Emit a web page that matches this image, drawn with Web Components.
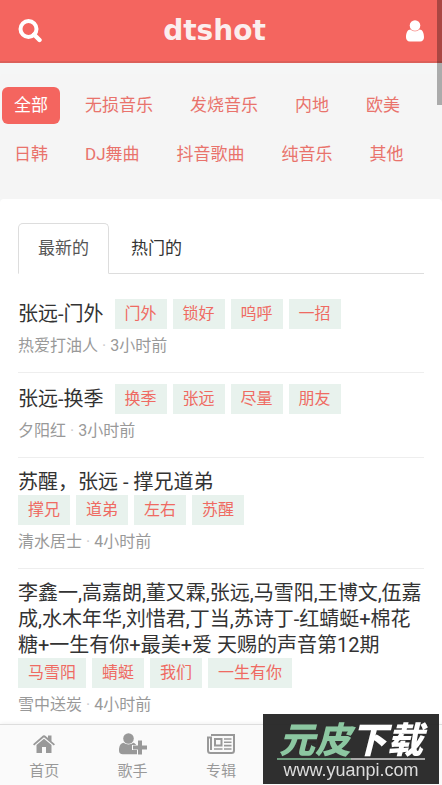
<!DOCTYPE html>
<html lang="zh-CN">
<head>
<meta charset="utf-8">
<meta name="viewport" content="width=device-width, initial-scale=1">
<title>dtshot</title>
<style>
  html, body { margin: 0; }
  body {
    font-family: Roboto, "Noto Sans CJK SC", sans-serif;
    background: #f5f6f6;
    color: #333;
    --accent: #f4655f;
    --line: #ddd;
  }
</style>
</head>
<body>
<music-app></music-app>
<script>
const define = (name, html, setup) => customElements.define(name, class extends HTMLElement {
  constructor() {
    super();
    this.attachShadow({ mode: 'open' }).innerHTML = html;
  }
  connectedCallback() { if (setup) setup(this, this.shadowRoot); }
});

const icons = {
  search: '<svg viewBox="0 0 24 24" width="24" height="24"><circle cx="10.5" cy="10" r="8" fill="none" stroke="currentColor" stroke-width="4"/><path d="M16 15.500l5.500 5.500" stroke="currentColor" stroke-width="4.400" stroke-linecap="round"/></svg>',
  user: '<svg viewBox="0 0 18 22" width="18" height="22"><circle cx="9" cy="5.500" r="5.300" fill="currentColor"/><path d="M4.500 9.500C1.500 9.500 0 13 0 17.300C0 20 1.500 21.500 3.800 21.500H14.200C16.500 21.500 18 20 18 17.300C18 13 16.500 9.500 13.500 9.500C11 11.900 7 11.900 4.500 9.500Z" fill="currentColor"/></svg>',
  home: '<svg viewBox="0 0 22 20" width="22" height="20" fill="currentColor"><path d="M0 10.300L10 1.500Q11 .8 12 1.500L15 4.100V1.500H18.500V7.200L22 10.300L20.800 11.600L11 3.300L1.200 11.600Z"/><path d="M11 4.700L18.500 11V19H13V13H9V19H3.500V11Z"/></svg>',
  singer: '<svg viewBox="0 0 28 22" width="28" height="22" fill="currentColor"><circle cx="9.500" cy="5.500" r="5.300"/><path d="M4.800 9.800C7.500 12 11.500 12 14.200 9.800C15.500 10 16.500 10.800 17.200 12H13V17H18V21.300H3.800C1.300 21.300 0 20 0 17.500C0 13 1.700 10 4.800 9.800Z"/><path d="M19 7.500H23V12.500H28V16.500H23V21.500H19V16.500H14V12.500H19Z"/></svg>',
  album: '<svg viewBox="0 0 28 20" width="28" height="20"><path d="M4 1H27V16.500Q27 19 24.500 19H3.500Q1 19 1 16.500V3.500H4V16" fill="none" stroke="currentColor" stroke-width="2"/><path d="M8 5H14.500V11.500H8Z" fill="none" stroke="currentColor" stroke-width="2"/><path d="M17 5H24.500M17 8.300H24.500M17 11.600H24.500M7 15H15.500M17 15H24.500" stroke="currentColor" stroke-width="1.600"/></svg>',
  playlist: '<svg viewBox="0 0 24 20" width="24" height="20"><path d="M2 2H22V18H2Z" fill="none" stroke="currentColor" stroke-width="3"/><path d="M5 8H19M5 13H19" stroke="currentColor" stroke-width="2"/></svg>'
};
icons.mine = icons.user;

define('app-icon', '<style>:host{display:inline-flex}svg{display:block}</style><span></span>', (el, root) => {
  root.querySelector('span').innerHTML = icons[el.getAttribute('name')] || '';
});

define('app-header', `
  <style>
    :host { display: grid; grid-template-columns: 44px 1fr 44px; align-items: center; height: 63px; padding: 0 5px 0 8px;
      background: var(--accent); border-bottom: 2px solid #dc605a; color: #fff; box-sizing: border-box; }
    button { border: 0; background: none; color: inherit; padding: 0; height: 44px; display: flex; align-items: center; justify-content: center; }
    a { justify-self: center; padding-right: 16px; color: #fbeeee; text-decoration: none; font: bold 28px/40px "DejaVu Sans", sans-serif; }
  </style>
  <button aria-label="搜索"><app-icon name="search"></app-icon></button>
  <a href="#">dtshot</a>
  <button aria-label="用户"><app-icon name="user"></app-icon></button>`);

define('category-link', `
  <style>
    :host { display: block; }
    a { display: block; padding: 0 12px; font-size: 17px; line-height: 37px; border-radius: 6px; color: #e9736c; text-decoration: none; }
    :host([active]) a { background: var(--accent); color: #fff; }
  </style>
  <a href="#"><slot></slot></a>`);

define('category-bar', `
  <style>
    :host { display: block; padding: 11px 0 0; }
    nav { display: flex; flex-wrap: wrap; gap: 12px 13px; padding: 13px 2px 26px; background: #f5f5f5; border-radius: 4px; }
  </style>
  <nav><slot></slot></nav>`);

define('sort-tabs', `
  <style>
    :host { display: flex; border-bottom: 1px solid var(--line); }
    button { font: inherit; font-size: 17px; line-height: 24px; padding: 12px 19px 13px; margin: 0 2px -1px 0; border: 1px solid transparent;
      border-radius: 5px 5px 0 0; background: none; color: #333; }
    button[aria-selected=true] { border-color: var(--line); border-bottom-color: #fff; background: #fff; color: #555; }
  </style>
  <button role="tab" aria-selected="true">最新的</button><button role="tab" aria-selected="false">热门的</button>`);

define('song-tag', `
  <style>
    :host { display: block; }
    a { display: block; padding: 0 10px; font-size: 16px; line-height: 30px; background: #e8f2ed; color: #ef6a62; text-decoration: none; }
  </style>
  <a href="#"><slot></slot></a>`);

define('song-item', `
  <style>
    :host { display: block; padding: 11px 0 15px; border-bottom: 1px solid #eee; }
    :host(:last-of-type) { border-bottom: 0; padding-bottom: 8px; }
    .top { display: flex; flex-wrap: wrap; align-items: center; column-gap: 11px; }
    h2 { margin: 0; font-size: 20px; line-height: 26px; font-weight: 400; color: #333; }
    .tags { display: flex; gap: 6px; }
    p { margin: 6px 0 0; font-size: 16px; line-height: 22px; color: #999; }
    i { color: #ccc; font-style: normal; }
  </style>
  <div class="top"><h2><slot name="title"></slot></h2><div class="tags"><slot></slot></div></div>
  <p><span class="by"></span> <i>·</i> <span class="when"></span></p>`, (el, root) => {
  root.querySelector('.by').textContent = el.getAttribute('by');
  root.querySelector('.when').textContent = el.getAttribute('when');
});

define('song-panel', `
  <style>
    :host { display: block; flex: 1; background: #fff; border-radius: 4px 4px 0 0; padding: 24px 18px 0; }
    .list { padding-top: 14px; }
  </style>
  <sort-tabs></sort-tabs>
  <div class="list"><slot></slot></div>`);

define('nav-item', `
  <style>
    :host { display: block; flex: 1; }
    a { display: flex; flex-direction: column; align-items: center; color: #999; text-decoration: none; font-size: 15px; line-height: 20px; }
    app-icon { height: 26px; align-items: center; margin-bottom: 4px; }
    :host([active]) a { color: var(--accent); }
  </style>
  <a href="#"><app-icon></app-icon><slot></slot></a>`, (el, root) => {
  const icon = document.createElement('app-icon');
  icon.setAttribute('name', el.getAttribute('icon'));
  root.querySelector('app-icon').replaceWith(icon);
  if (el.hasAttribute('label')) root.querySelector('a').setAttribute('aria-label', el.getAttribute('label'));
});

define('bottom-nav', `
  <style>
    :host { display: flex; position: sticky; bottom: 0; padding: 6px 0 4px; background: #fafafa; border-top: 1px solid var(--line); box-shadow: 0 -1px 4px rgba(0,0,0,.06); }
  </style>
  <slot></slot>`);

define('site-watermark', `
  <style>
    :host { position: fixed; right: 3px; bottom: 1px; width: 176px; height: 70px; background: rgba(38,38,38,.96);
      display: flex; flex-direction: column; align-items: center; box-sizing: border-box; padding-top: 4px; font-family: "Liberation Sans", "Noto Sans CJK SC", sans-serif; }
    b { font: italic 900 36px/38px "Noto Sans CJK SC", sans-serif; color: #fff; white-space: nowrap; }
    b span { color: #8cc7a1; }
    hr { border: 0; height: 2px; width: 148px; margin: 2px 0 0; background: linear-gradient(90deg, #6e9c7e 50%, #aaa 50%); }
    small { font-size: 18px; line-height: 20px; color: #ddd; }
  </style>
  <b><span>元皮</span>下载</b><hr><small>www.yuanpi.com</small>`);

define('scroll-thumb', `<style>:host { position: fixed; top: 0; right: 0; width: 5px; height: 105px; background: rgba(0,0,0,.3); }</style>`);

define('music-app', `
  <style>
    :host { display: flex; flex-direction: column; min-height: 100vh; }
  </style>
  <app-header></app-header>
  <category-bar>
    <category-link active>全部</category-link><category-link>无损音乐</category-link><category-link>发烧音乐</category-link><category-link>内地</category-link><category-link>欧美</category-link><category-link>日韩</category-link><category-link>DJ舞曲</category-link><category-link>抖音歌曲</category-link><category-link>纯音乐</category-link><category-link>其他</category-link>
  </category-bar>
  <song-panel>
    <song-item by="热爱打油人" when="3小时前"><span slot="title">张远-门外</span><song-tag>门外</song-tag><song-tag>锁好</song-tag><song-tag>呜呼</song-tag><song-tag>一招</song-tag></song-item>
    <song-item by="夕阳红" when="3小时前"><span slot="title">张远-换季</span><song-tag>换季</song-tag><song-tag>张远</song-tag><song-tag>尽量</song-tag><song-tag>朋友</song-tag></song-item>
    <song-item by="清水居士" when="4小时前"><span slot="title">苏醒，张远 - 撑兄道弟</span><song-tag>撑兄</song-tag><song-tag>道弟</song-tag><song-tag>左右</song-tag><song-tag>苏醒</song-tag></song-item>
    <song-item by="雪中送炭" when="4小时前"><span slot="title">李鑫一,高嘉朗,董又霖,张远,马雪阳,王博文,伍嘉成,水木年华,刘惜君,丁当,苏诗丁-红蜻蜓+棉花糖+一生有你+最美+爱 天赐的声音第12期</span><song-tag>马雪阳</song-tag><song-tag>蜻蜓</song-tag><song-tag>我们</song-tag><song-tag>一生有你</song-tag></song-item>
  </song-panel>
  <bottom-nav>
    <nav-item icon="home">首页</nav-item><nav-item icon="singer">歌手</nav-item><nav-item icon="album">专辑</nav-item><nav-item icon="playlist" label="歌单" active></nav-item><nav-item icon="mine" label="我的"></nav-item>
  </bottom-nav>
  <site-watermark></site-watermark>
  <scroll-thumb></scroll-thumb>`);
</script>
</body>
</html>
